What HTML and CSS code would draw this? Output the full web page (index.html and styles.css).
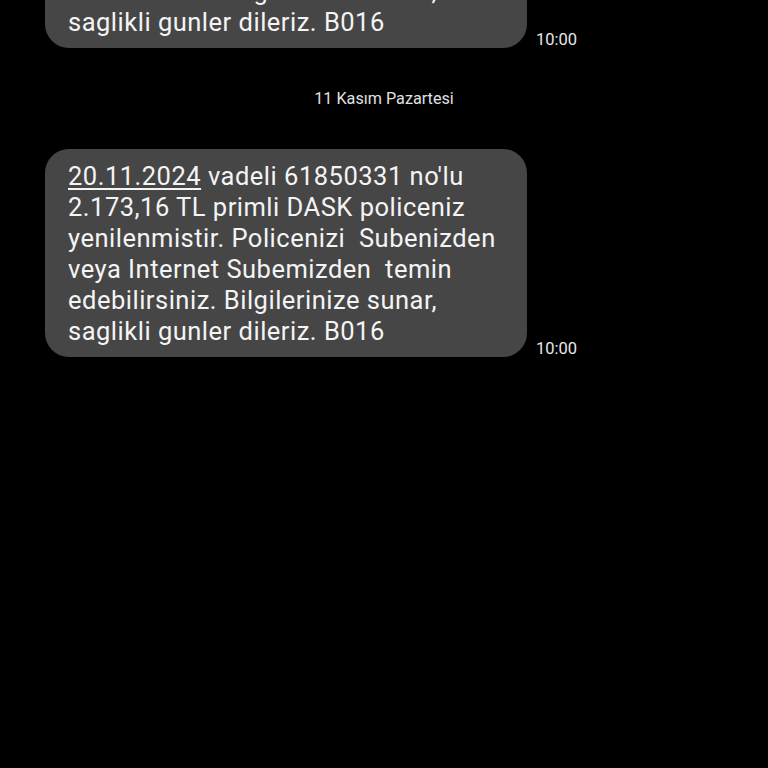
FILE: index.html
```html
<!DOCTYPE html>
<html lang="tr">
<head>
<meta charset="utf-8">
<title>Mesajlar</title>
<link rel="stylesheet" href="styles.css">
</head>
<body>
<main class="thread">
  <div class="row row-first">
    <div class="bubble"><span class="link">20.11.2024</span> vadeli 61850331 no'lu
2.173,16 TL primli DASK policeniz
yenilenmistir. Policenizi  Subenizden
veya Internet Subemizden  temin
edebilirsiniz. Bilgilerinize sunar,
saglikli gunler dileriz. B016</div>
    <div class="time">10:00</div>
  </div>
  <div class="date">11 Kasım Pazartesi</div>
  <div class="row">
    <div class="bubble"><span class="link">20.11.2024</span> vadeli 61850331 no'lu
2.173,16 TL primli DASK policeniz
yenilenmistir. Policenizi  Subenizden
veya Internet Subemizden  temin
edebilirsiniz. Bilgilerinize sunar,
saglikli gunler dileriz. B016</div>
    <div class="time">10:00</div>
  </div>
</main>
</body>
</html>
```
FILE: styles.css
```css
html, body {
  margin: 0;
  padding: 0;
  background: #000;
  height: 100%;
  overflow: hidden;
}
body {
  font-family: Roboto, "Noto Sans", sans-serif;
  color: #f2f2f2;
}
.thread {
  display: flex;
  flex-direction: column;
}
.row {
  display: flex;
  align-items: flex-end;
  padding-left: 45px;
}
.row-first {
  margin-top: -160px;
}
.bubble {
  width: 482px;
  box-sizing: border-box;
  background: #464646;
  border-radius: 24px;
  padding: 12px 16px 10px 23px;
  font-size: 25.5px;
  line-height: 31px;
  letter-spacing: 0.5px;
  white-space: pre;
  color: #f4f4f4;
}
.link {
  text-decoration: underline;
  text-decoration-thickness: 2px;
  text-underline-offset: 3px;
}
.time {
  margin-left: 9px;
  font-size: 16.5px;
  line-height: 16px;
  color: #e8e8e8;
}
.date {
  margin: 41px 0 40px;
  text-align: center;
  font-size: 16.2px;
  line-height: 20px;
  color: #e0e0e0;
}
```
